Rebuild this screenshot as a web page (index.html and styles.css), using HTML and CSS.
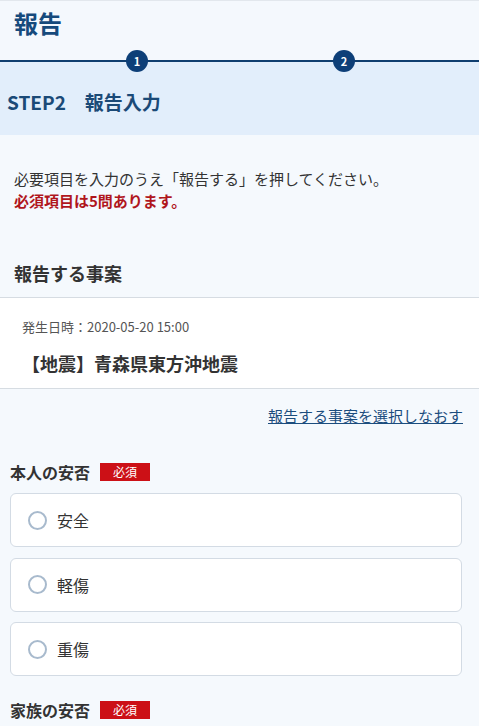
FILE: index.html
```html
<!DOCTYPE html>
<html lang="ja">
<head>
<meta charset="utf-8">
<title>報告</title>
<link rel="stylesheet" href="styles.css">
</head>
<body>
<header class="page-header">
  <h1 class="page-title">報告</h1>
</header>
<section class="step-band">
  <div class="steps">
    <span class="step-dot step-first">1</span>
    <span class="step-dot step-second">2</span>
  </div>
  <h2 class="step-title">STEP2　報告入力</h2>
</section>
<main class="content">
  <div class="intro">
    <p class="intro-text">必要項目を入力のうえ「報告する」を押してください。</p>
    <p class="intro-required">必須項目は5問あります。</p>
  </div>
  <h3 class="section-title">報告する事案</h3>
  <div class="event">
    <p class="event-date">発生日時：2020-05-20 15:00</p>
    <p class="event-name">【地震】青森県東方沖地震</p>
  </div>
  <div class="relink-row">
    <a class="relink" href="#">報告する事案を選択しなおす</a>
  </div>
  <div class="question">
    <div class="q-label"><span class="q-text">本人の安否</span><span class="badge">必須</span></div>
    <div class="options">
      <label class="option"><span class="radio"></span><span class="opt-text">安全</span></label>
      <label class="option"><span class="radio"></span><span class="opt-text">軽傷</span></label>
      <label class="option"><span class="radio"></span><span class="opt-text">重傷</span></label>
    </div>
  </div>
  <div class="question question-next">
    <div class="q-label"><span class="q-text">家族の安否</span><span class="badge">必須</span></div>
  </div>
</main>
</body>
</html>
```

FILE: styles.css
```css
html, body {
  margin: 0;
  padding: 0;
}
body {
  background: #f5f9fd;
  font-family: "Noto Sans CJK JP", "Noto Sans", sans-serif;
  color: #333333;
  overflow: hidden;
}
p, h1, h2, h3 {
  margin: 0;
}
.page-header {
  border-top: 1px solid #e2e7ed;
  border-bottom: 2px solid #0f3e6f;
  background: #f4f8fd;
  padding: 4px 14px 19px;
}
.page-title {
  font-size: 24px;
  line-height: 36px;
  font-weight: 700;
  color: #164a7c;
}
.step-band {
  display: flow-root;
  background: #e2eefb;
  padding: 0 7px 18px;
}
.steps {
  display: flex;
  margin-top: -12px;
  padding-left: 119px;
  gap: 185px;
}
.step-dot {
  width: 22px;
  height: 22px;
  border-radius: 50%;
  background: #0d3f78;
  color: #ffffff;
  font-size: 11px;
  line-height: 22px;
  text-align: center;
  font-weight: 700;
}
.step-title {
  margin-top: 15px;
  font-size: 19px;
  line-height: 30px;
  font-weight: 700;
  color: #1b4a77;
}
.intro {
  padding: 33px 14px 0;
  font-size: 15px;
  line-height: 22px;
}
.intro-required {
  color: #b0161c;
  font-weight: 700;
}
.section-title {
  margin-top: 47px;
  padding: 0 14px 10px;
  font-size: 18px;
  line-height: 28px;
  font-weight: 700;
  color: #333333;
}
.event {
  background: #ffffff;
  border-top: 1px solid #d6dce2;
  border-bottom: 1px solid #d6dce2;
  padding: 19px 22px 11px;
}
.event-date {
  font-size: 13px;
  line-height: 20px;
  color: #555555;
}
.event-name {
  margin-top: 12px;
  font-size: 18px;
  line-height: 28px;
  font-weight: 700;
  color: #333333;
}
.relink-row {
  margin-top: 16px;
  padding-right: 16px;
  text-align: right;
  font-size: 15px;
  line-height: 22px;
}
.relink {
  color: #1c4d7e;
  text-decoration: underline;
}
.question {
  margin-top: 33px;
  padding: 0 17px 0 10px;
}
.question-next {
  margin-top: 22px;
}
.q-label {
  display: flex;
  align-items: center;
  gap: 10px;
  height: 24px;
}
.q-text {
  font-size: 16px;
  line-height: 24px;
  font-weight: 700;
  color: #333333;
}
.badge {
  width: 50px;
  height: 18px;
  background: #cc1016;
  color: #ffffff;
  font-size: 12px;
  line-height: 18px;
  text-align: center;
}
.options {
  margin-top: 9px;
  display: flex;
  flex-direction: column;
  gap: 10.5px;
}
.option {
  display: flex;
  align-items: center;
  gap: 10px;
  height: 54px;
  box-sizing: border-box;
  padding-left: 17px;
  background: #ffffff;
  border: 1px solid #d3dbe4;
  border-radius: 6px;
}
.radio {
  width: 19px;
  height: 19px;
  box-sizing: border-box;
  border: 2px solid #a8bacd;
  border-radius: 50%;
  background: #ffffff;
}
.opt-text {
  font-size: 16px;
  line-height: 24px;
  color: #333333;
}
```
